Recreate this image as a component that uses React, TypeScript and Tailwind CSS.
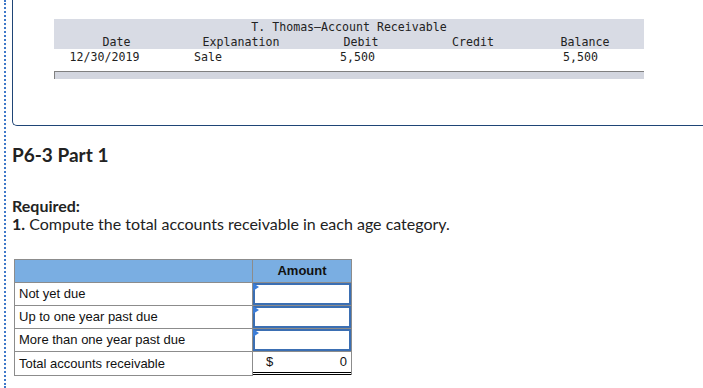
import React from "react";

const rows = ["Not yet due", "Up to one year past due", "More than one year past due"];

function InputCell() {
  return (
    <td className="border border-[#8c8c8c] p-0 h-[23px]">
      <div className="relative h-[22px] border-2 border-[#3b6fb3] bg-white">
        {/* little marker in the corner */}
        <span className="absolute -left-[2px] -top-[2px] w-0 h-0 border-t-[4px] border-b-[4px] border-l-[6px] border-t-transparent border-b-transparent border-l-[#3b7dd8]" />
      </div>
    </td>
  );
}

export default function App() {
  return (
    <div className="w-[703px] h-[388px] overflow-hidden bg-white">
      <div className="ml-[4px] h-[388px] border-l-2 border-dotted border-[#3f78c8] pl-[6px]">
        {/* ================= LEDGER PANEL ================= */}
        <div className="h-[126px] border-l border-b border-[#1f4576] rounded-bl-[5px] pl-[41px] pt-[19px]">
          <div className="w-[590px] font-['DejaVu_Sans_Mono',monospace] text-[11.6px] text-[#222]">
            <div className="bg-[#d8dbe4] h-[30px] leading-[14px] pt-[1px]">
              <div className="text-center">T. Thomas—Account Receivable</div>
              <div className="grid grid-cols-[101px_172px_68px_156px_68px_1fr] pt-[1px]">
                <div className="text-center pl-[24px]">Date</div>
                <div className="text-center">Explanation</div>
                <div className="text-center">Debit</div>
                <div className="text-center">Credit</div>
                <div className="text-center">Balance</div>
                <div />
              </div>
            </div>
            <div className="grid grid-cols-[101px_172px_68px_156px_68px_1fr] h-[15px] leading-[16px]">
              <div className="text-center">12/30/2019</div>
              <div className="pl-[39px]">Sale</div>
              <div className="pl-[13px]">5,500</div>
              <div />
              <div className="pl-[12px]">5,500</div>
              <div />
            </div>
            <div className="mt-[7px] h-[8px] bg-[#d3d6df] border-t border-l border-[#808080]" />
          </div>
        </div>

        {/* ================= QUESTION ================= */}
        <div className="font-['Lato',sans-serif] text-[#222]">
          <h2 className="mt-[19px] text-[19px] font-bold leading-[20px]">P6-3 Part 1</h2>
          <div className="mt-[32px] text-[16px] leading-[18px]">
            <div className="font-bold">Required:</div>
            <div>
              <span className="font-bold">1.</span> Compute the total accounts receivable in each age category.
            </div>
          </div>
        </div>

        {/* ================= AGING TABLE ================= */}
        <table className="mt-[26px] ml-[2px] border-collapse font-['Liberation_Sans',Arial,sans-serif] text-[13px] text-[#111]">
          <tbody>
            <tr className="bg-[#7aaee2] h-[23px]">
              <td className="border border-[#8c8c8c] w-[238px]" />
              <td className="border border-[#8c8c8c] w-[99px] text-center font-bold text-[13px]">Amount</td>
            </tr>
            {rows.map((r) => (
              <tr key={r}>
                <td className="border border-[#8c8c8c] px-[4px] h-[23px]">{r}</td>
                <InputCell />
              </tr>
            ))}
            <tr className="h-[23px]">
              <td className="border border-[#8c8c8c] px-[4px]">Total accounts receivable</td>
              <td className="border border-[#8c8c8c] border-b-0 p-0">
                <div className="flex justify-between pl-[13px] pr-[4px] h-[23px] items-center border-b-[3px] border-double border-black">
                  <span>$</span>
                  <span>0</span>
                </div>
              </td>
            </tr>
          </tbody>
        </table>
      </div>
    </div>
  );
}
